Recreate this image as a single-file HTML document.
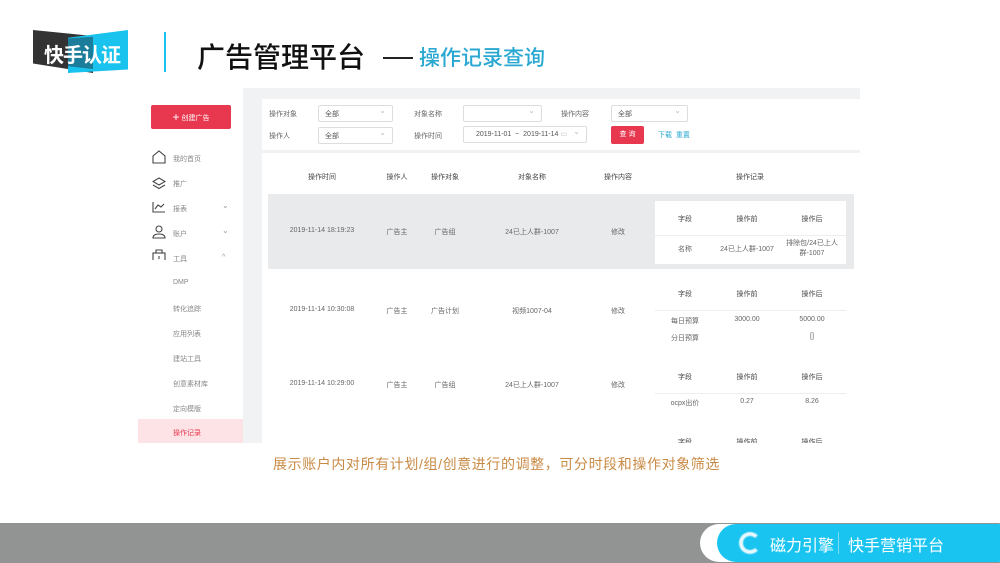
<!DOCTYPE html>
<html><head><meta charset="utf-8"><style>
*{margin:0;padding:0;box-sizing:border-box}
body{width:1000px;height:563px;overflow:hidden;background:#fff;position:relative;font-family:"Liberation Sans","Noto Sans CJK SC",sans-serif;color:#333}
.a{position:absolute;white-space:nowrap}
.c{position:absolute;white-space:nowrap;transform:translateX(-50%)}
.s{font-size:7px;color:#666}
.h{font-size:7px;color:#444}
.sel{position:absolute;height:17px;border:1px solid #ddd;background:#fff;font-size:7px;color:#555;padding:3px 6px;border-radius:2px}
.sel:after{content:"⌄";position:absolute;right:6px;top:0;color:#bbb;font-size:8px}
.side{font-size:7px;color:#888;position:absolute;left:173px}
</style></head><body>
<div class="a" style="left:0;top:0;width:1000px;height:80px;background:#fff"></div>
<div class="a" style="left:33px;top:30px;width:60px;height:43px;background:#333;clip-path:polygon(0 0,100% 14%,100% 100%,0 78%)"></div>
<div class="a" style="left:68px;top:30px;width:60px;height:43px;background:#1ac3ee;clip-path:polygon(0 18%,100% 0,100% 92%,0 100%)"></div>
<div class="a" style="left:68px;top:35px;width:25px;height:34px;background:#1b7d99;clip-path:polygon(0 10%,100% 5%,100% 100%,0 92%)"></div>
<div class="a" style="left:44px;top:39px;font-size:20px;font-weight:bold;color:#fff;letter-spacing:-1px">快手认证</div>
<div class="a" style="left:164px;top:32px;width:2px;height:40px;background:#1ac3ee"></div>
<div class="a" style="left:197px;top:36px;font-size:28px;font-weight:500;color:#111">广告管理平台</div>
<div class="a" style="left:383px;top:57px;width:30px;height:2px;background:#222"></div>
<div class="a" style="left:419px;top:42px;font-size:21px;font-weight:500;color:#2aa8d2">操作记录查询</div>
<div class="a" style="left:138px;top:88px;width:722px;height:355px;background:#f1f2f4"></div>
<div class="a" style="left:138px;top:88px;width:105px;height:355px;background:#fff"></div>
<div class="a" style="left:151px;top:105px;width:80px;height:24px;background:#e8384f;border-radius:2px;color:#fff;font-size:7px;text-align:center;line-height:24px"><span style="font-size:12px;vertical-align:-1px">+</span> 创建广告</div>
<svg class="a" style="left:152px;top:150px" width="14" height="110" fill="none" stroke="#444" stroke-width="1.1">
<path d="M1 13V6L7 1L13 6V13Z"/>
<path d="M7 28L13 31.5L7 35L1 31.5Z M1 35L7 38.5L13 35"/>
<path d="M1 52V62H13 M3 59L6 55L9 57L12 54"/>
<circle cx="7" cy="79" r="3"/><path d="M1 88Q1 84 7 84Q13 84 13 88Z"/>
<rect x="1" y="103" width="12" height="10"/><path d="M4 103V100H10V103 M7 106V109"/>
</svg>
<div class="side" style="top:154px">我的首页</div>
<div class="side" style="top:179px">推广</div>
<div class="side" style="top:204px">报表</div><div class="a" style="left:222px;top:201px;font-size:8px;color:#999">⌄</div>
<div class="side" style="top:229px">账户</div><div class="a" style="left:222px;top:226px;font-size:8px;color:#999">⌄</div>
<div class="side" style="top:254px">工具</div><div class="a" style="left:222px;top:254px;font-size:7px;color:#999">^</div>
<div class="side" style="top:279px">DMP</div>
<div class="side" style="top:304px">转化追踪</div>
<div class="side" style="top:329px">应用列表</div>
<div class="side" style="top:354px">建站工具</div>
<div class="side" style="top:379px">创意素材库</div>
<div class="side" style="top:404px">定向模版</div>
<div class="a" style="left:138px;top:419px;width:105px;height:24px;background:#fde3e6"></div>
<div class="side" style="top:428px;color:#e8384f">操作记录</div>
<div class="a" style="left:262px;top:99px;width:598px;height:51px;background:#fff"></div>
<div class="a s" style="left:269px;top:109px">操作对象</div>
<div class="sel" style="left:318px;top:105px;width:75px">全部</div>
<div class="a s" style="left:414px;top:109px">对象名称</div>
<div class="sel" style="left:463px;top:105px;width:79px"></div>
<div class="a s" style="left:561px;top:109px">操作内容</div>
<div class="sel" style="left:611px;top:105px;width:77px">全部</div>
<div class="a s" style="left:269px;top:131px">操作人</div>
<div class="sel" style="left:318px;top:127px;width:75px">全部</div>
<div class="a s" style="left:414px;top:131px">操作时间</div>
<div class="sel" style="left:463px;top:126px;width:124px;padding-left:12px">2019-11-01 &nbsp;~ &nbsp;2019-11-14 <span style="color:#bbb">▭</span></div>
<div class="a" style="left:611px;top:126px;width:33px;height:18px;background:#e8384f;border-radius:2px;color:#fff;font-size:7px;text-align:center;line-height:18px">查 询</div>
<div class="a" style="left:658px;top:130px;font-size:7px;color:#2aa8d2">下载 &nbsp;重置</div>
<div class="a" style="left:262px;top:153px;width:598px;height:290px;background:#fff"></div>
<div class="c h" style="left:322px;top:172px">操作时间</div>
<div class="c h" style="left:397px;top:172px">操作人</div>
<div class="c h" style="left:445px;top:172px">操作对象</div>
<div class="c h" style="left:532px;top:172px">对象名称</div>
<div class="c h" style="left:618px;top:172px">操作内容</div>
<div class="c h" style="left:750px;top:172px">操作记录</div>
<div class="a" style="left:268px;top:194px;width:586px;height:75px;background:#e9eaec"></div>
<div class="a" style="left:655px;top:201px;width:191px;height:63px;background:#fff"></div>
<div class="a" style="left:655px;top:235px;width:191px;height:1px;background:#eee"></div>
<div class="c s" style="left:322px;top:227px">2019-11-14 18:19:23</div>
<div class="c s" style="left:397px;top:227px">广告主</div>
<div class="c s" style="left:445px;top:227px">广告组</div>
<div class="c s" style="left:532px;top:227px">24已上人群-1007</div>
<div class="c s" style="left:618px;top:227px">修改</div>
<div class="c h" style="left:685px;top:214px">字段</div><div class="c h" style="left:747px;top:214px">操作前</div><div class="c h" style="left:812px;top:214px">操作后</div>
<div class="c s" style="left:685px;top:244px">名称</div><div class="c s" style="left:747px;top:244px">24已上人群-1007</div>
<div class="c s" style="left:812px;top:239px;text-align:center;line-height:10px">排除包/24已上人<br>群-1007</div>
<div class="c s" style="left:322px;top:306px">2019-11-14 10:30:08</div>
<div class="c s" style="left:397px;top:306px">广告主</div>
<div class="c s" style="left:445px;top:306px">广告计划</div>
<div class="c s" style="left:532px;top:306px">视频1007-04</div>
<div class="c s" style="left:618px;top:306px">修改</div>
<div class="c h" style="left:685px;top:289px">字段</div><div class="c h" style="left:747px;top:289px">操作前</div><div class="c h" style="left:812px;top:289px">操作后</div>
<div class="a" style="left:655px;top:310px;width:191px;height:1px;background:#eee"></div>
<div class="c s" style="left:685px;top:316px">每日预算</div><div class="c s" style="left:747px;top:316px">3000.00</div><div class="c s" style="left:812px;top:316px">5000.00</div>
<div class="c s" style="left:685px;top:333px">分日预算</div><div class="c s" style="left:812px;top:333px">[]</div>
<div class="c s" style="left:322px;top:380px">2019-11-14 10:29:00</div>
<div class="c s" style="left:397px;top:380px">广告主</div>
<div class="c s" style="left:445px;top:380px">广告组</div>
<div class="c s" style="left:532px;top:380px">24已上人群-1007</div>
<div class="c s" style="left:618px;top:380px">修改</div>
<div class="c h" style="left:685px;top:372px">字段</div><div class="c h" style="left:747px;top:372px">操作前</div><div class="c h" style="left:812px;top:372px">操作后</div>
<div class="a" style="left:655px;top:393px;width:191px;height:1px;background:#eee"></div>
<div class="c s" style="left:685px;top:398px">ocpx出价</div><div class="c s" style="left:747px;top:398px">0.27</div><div class="c s" style="left:812px;top:398px">8.26</div>
<div class="c h" style="left:685px;top:437px">字段</div><div class="c h" style="left:747px;top:437px">操作前</div><div class="c h" style="left:812px;top:437px">操作后</div>
<div class="a" style="left:0;top:443px;width:1000px;height:80px;background:#fff"></div>
<div class="a" style="left:273px;top:454px;font-size:14px;letter-spacing:0.6px;color:#c98a45">展示账户内对所有计划/组/创意进行的调整，可分时段和操作对象筛选</div>
<div class="a" style="left:0;top:523px;width:1000px;height:40px;background:#929393"></div>
<div class="a" style="left:700px;top:524px;width:320px;height:38px;background:#fff;border-radius:19px"></div>
<div class="a" style="left:717px;top:524px;width:300px;height:38px;background:#19c4f0;border-radius:19px"></div>
<div class="a" style="left:739px;top:532px;width:22px;height:22px;border-radius:50%;border:4px solid #e8f8fd;border-right-color:transparent;filter:blur(0.6px)"></div>
<div class="a" style="left:770px;top:532px;font-size:16px;color:#fff">磁力引擎</div>
<div class="a" style="left:838px;top:532px;width:1px;height:22px;background:#7ddaf5"></div>
<div class="a" style="left:848px;top:532px;font-size:16px;color:#fff">快手营销平台</div>
</body></html>
